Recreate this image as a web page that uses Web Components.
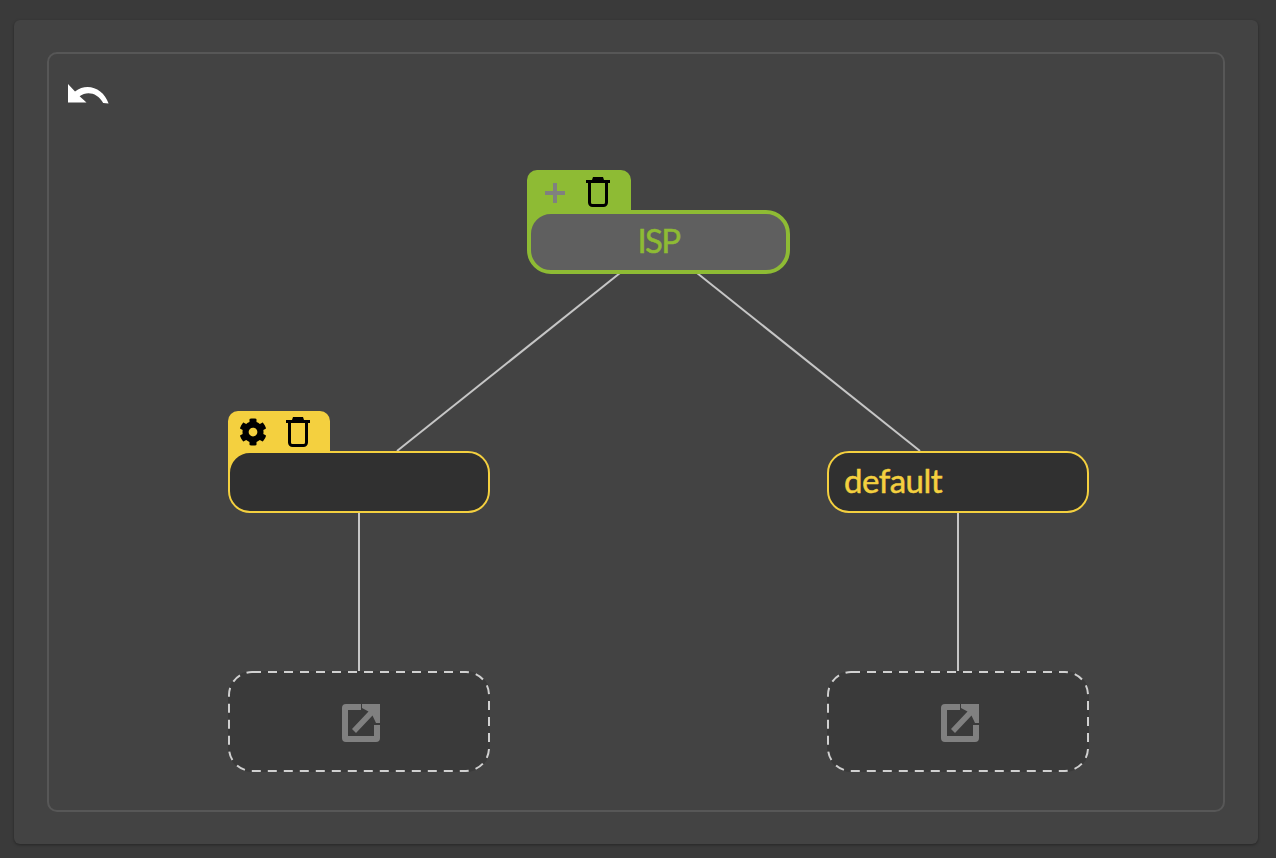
<!DOCTYPE html>
<html>
<head>
<meta charset="utf-8">
<style>
  html, body { margin: 0; height: 100%; background: #3a3a3a; font-family: Lato, "Noto Sans", sans-serif; }
</style>
</head>
<body>
<app-panel>
  <tree-canvas>
    <undo-button></undo-button>
    <svg slot="links" width="1276" height="858" viewBox="0 0 1276 858" fill="none" stroke="#c6c6c6" stroke-width="2">
      <path d="M620 273L397 451"/>
      <path d="M697 273L920 451"/>
      <path d="M359 513V671"/>
      <path d="M958 513V671"/>
    </svg>
    <tree-node x="527" y="170" tone="green" tools="add" align="center">ISP</tree-node>
    <tree-node x="228" y="411" tone="yellow" tools="gear"></tree-node>
    <tree-node x="827" y="451" tone="yellow">default</tree-node>
    <link-slot x="228" y="671"></link-slot>
    <link-slot x="827" y="671"></link-slot>
  </tree-canvas>
</app-panel>

<script>
const panelTemplate = document.createElement('template');
panelTemplate.innerHTML = `
<style>
  :host {
    display: block;
    box-sizing: border-box;
    height: 858px;
    padding: 20px 18px 14px 14px;
  }
  .panel {
    box-sizing: border-box;
    height: 100%;
    padding: 32px 33px;
    background: #434343;
    border-radius: 6px;
    box-shadow: 0 1px 3px rgba(0, 0, 0, 0.35);
  }
</style>
<div class="panel"><slot></slot></div>
`;

class AppPanel extends HTMLElement {
  constructor() {
    super();
    this.attachShadow({ mode: 'open' }).appendChild(panelTemplate.content.cloneNode(true));
  }
}

const canvasTemplate = document.createElement('template');
canvasTemplate.innerHTML = `
<style>
  :host {
    display: block;
    box-sizing: border-box;
    height: 760px;
    border: 2px solid #575757;
    border-radius: 10px;
  }
  /* links and nodes use page coordinates */
  .links { position: absolute; left: 0; top: 0; display: block; }
</style>
<div class="links"><slot name="links"></slot></div>
<slot></slot>
`;

class TreeCanvas extends HTMLElement {
  constructor() {
    super();
    this.attachShadow({ mode: 'open' }).appendChild(canvasTemplate.content.cloneNode(true));
  }
}

const undoTemplate = document.createElement('template');
undoTemplate.innerHTML = `
<style>
  :host { position: absolute; left: 67px; top: 83px; display: block; width: 42px; height: 22px; }
  svg { display: block; }
</style>
<svg width="42" height="22" viewBox="0 0 42 22">
  <path fill="#fff" d="M1 1L1 19.5L19.5 19.5L12.6 13.2C20 7.6 30.5 9.6 36.2 20L41.6 20.6C36.6 5.6 20.6 -1 8 8.4Z"/>
</svg>
`;

class UndoButton extends HTMLElement {
  constructor() {
    super();
    this.attachShadow({ mode: 'open' }).appendChild(undoTemplate.content.cloneNode(true));
  }
}

const TRASH = `
<svg width="24" height="30" viewBox="0 0 24 30" fill="none" stroke="#000">
  <path fill="#000" stroke="none" d="M7 0H17L18 3H24V6H0V3H6Z"/>
  <path stroke-width="3" d="M3.5 6V25.5A3 3 0 0 0 6.5 28.5H17.5A3 3 0 0 0 20.5 25.5V6"/>
</svg>`;

const TOOLS = {
  add: `<svg class="tool" width="22" height="22" viewBox="0 0 22 22"><path fill="#808080" d="M9 1H13V9H21V13H13V21H9V13H1V9H9Z"/></svg>`,
  gear: `<svg class="tool" width="28" height="28" viewBox="0 0 512 512"><path fill="#000" d="M487.4 315.7l-42.6-24.6c4.3-23.2 4.3-47 0-70.2l42.6-24.6c4.9-2.8 7.1-8.6 5.5-14-11.1-35.6-30-67.8-54.7-94.6-3.8-4.1-10-5.1-14.8-2.3L380.8 110c-17.9-15.4-38.5-27.3-60.8-35.1V25.8c0-5.6-3.9-10.5-9.4-11.7-36.7-8.2-74.3-7.8-109.2 0-5.5 1.2-9.4 6.1-9.4 11.7V75c-22.2 7.9-42.8 19.8-60.8 35.1L88.7 85.5c-4.9-2.8-11-1.9-14.8 2.3-24.7 26.7-43.6 58.9-54.7 94.6-1.7 5.4.6 11.2 5.5 14L67.3 221c-4.3 23.2-4.3 47 0 70.2l-42.6 24.6c-4.9 2.8-7.1 8.6-5.5 14 11.1 35.6 30 67.8 54.7 94.6 3.8 4.1 10 5.1 14.8 2.3l42.6-24.6c17.9 15.4 38.5 27.3 60.8 35.1v49.2c0 5.6 3.9 10.5 9.4 11.7 36.7 8.2 74.3 7.8 109.2 0 5.5-1.2 9.4-6.1 9.4-11.7v-49.2c22.2-7.9 42.8-19.8 60.8-35.1l42.6 24.6c4.9 2.8 11 1.9 14.8-2.3 24.7-26.7 43.6-58.9 54.7-94.6 1.5-5.5-.7-11.3-5.6-14.1zM256 336c-44.1 0-80-35.9-80-80s35.9-80 80-80 80 35.9 80 80-35.9 80-80 80z"/></svg>`
};

const TONES = {
  green: { main: '#8ebb34', fill: '#5f5f5f', border: 4, width: 263, height: 64, radius: 24, tabWidth: 104, tabHeight: 40, toolLeft: 17, binLeft: 71, binTop: 7, spacing: -1.6 },
  yellow: { main: '#f4d03f', fill: '#303030', border: 2, width: 262, height: 62, radius: 22, tabWidth: 102, tabHeight: 40, toolLeft: 11, binLeft: 70, binTop: 6, spacing: -0.5 }
};

class TreeNode extends HTMLElement {
  connectedCallback() {
    if (this.shadowRoot) return;
    const tone = TONES[this.getAttribute('tone')];
    const tool = this.getAttribute('tools');
    const root = this.attachShadow({ mode: 'open' });
    root.innerHTML = `
<style>
  :host {
    position: absolute;
    left: ${this.getAttribute('x')}px;
    top: ${this.getAttribute('y')}px;
    display: flex;
    flex-direction: column;
    align-items: flex-start;
    width: ${tone.width}px;
  }
  .tabs {
    box-sizing: border-box;
    display: flex;
    align-items: flex-start;
    width: ${tone.tabWidth}px;
    height: ${tone.tabHeight + 24}px;
    margin-bottom: -24px;
    padding: 0 0 0 ${tone.toolLeft}px;
    background: ${tone.main};
    border-radius: 10px 10px 0 0;
  }
  .tool { display: block; flex: none; margin-top: ${tool === 'gear' ? 7 : 12}px; }
  .bin { position: absolute; left: ${tone.binLeft - 12}px; top: ${tone.binTop}px; display: block; height: 30px; }
  .box {
    position: relative;
    box-sizing: border-box;
    display: flex;
    align-items: center;
    justify-content: ${this.getAttribute('align') === 'center' ? 'center' : 'flex-start'};
    width: 100%;
    height: ${tone.height}px;
    padding: 0 15px 4px;
    background: ${tone.fill};
    border: ${tone.border}px solid ${tone.main};
    border-radius: ${tone.radius}px;
    color: ${tone.main};
    font-size: 33px;
    line-height: 1;
    letter-spacing: ${tone.spacing}px;
    -webkit-text-stroke: 0.5px ${tone.main};
  }
</style>
${tool ? `<div class="tabs">${TOOLS[tool]}<span class="bin">${TRASH}</span></div>` : ''}
<div class="box"><slot></slot></div>
`;
  }
}

const slotTemplate = document.createElement('template');
slotTemplate.innerHTML = `
<style>
  :host {
    position: absolute;
    box-sizing: border-box;
    display: flex;
    align-items: center;
    justify-content: center;
    width: 262px;
    height: 101px;
    padding: 3px 0 0 4px;
    background: #3a3a3a;
    border-radius: 24px;
  }
  .dash { position: absolute; left: 0; top: 0; }
  .icon { display: block; position: relative; }
</style>
<svg class="dash" width="262" height="101" fill="none">
  <rect x="1" y="1" width="260" height="99" rx="23" stroke="#d0d0d0" stroke-width="2" stroke-dasharray="9 7"/>
</svg>
<svg class="icon" width="40" height="40" viewBox="0 0 40 40">
  <path fill="#808080" d="M5 1H20V7H7V33H33V22H39V35A4 4 0 0 1 35 39H5A4 4 0 0 1 1 35V5A4 4 0 0 1 5 1Z"/>
  <path fill="#808080" d="M21 1H39V20H35L31.5 12.5L15 30L11 26L27.5 8.5L21 5Z"/>
</svg>
`;

class LinkSlot extends HTMLElement {
  constructor() {
    super();
    this.attachShadow({ mode: 'open' }).appendChild(slotTemplate.content.cloneNode(true));
  }
  connectedCallback() {
    this.style.left = this.getAttribute('x') + 'px';
    this.style.top = this.getAttribute('y') + 'px';
  }
}

customElements.define('app-panel', AppPanel);
customElements.define('tree-canvas', TreeCanvas);
customElements.define('undo-button', UndoButton);
customElements.define('tree-node', TreeNode);
customElements.define('link-slot', LinkSlot);
</script>
</body>
</html>
